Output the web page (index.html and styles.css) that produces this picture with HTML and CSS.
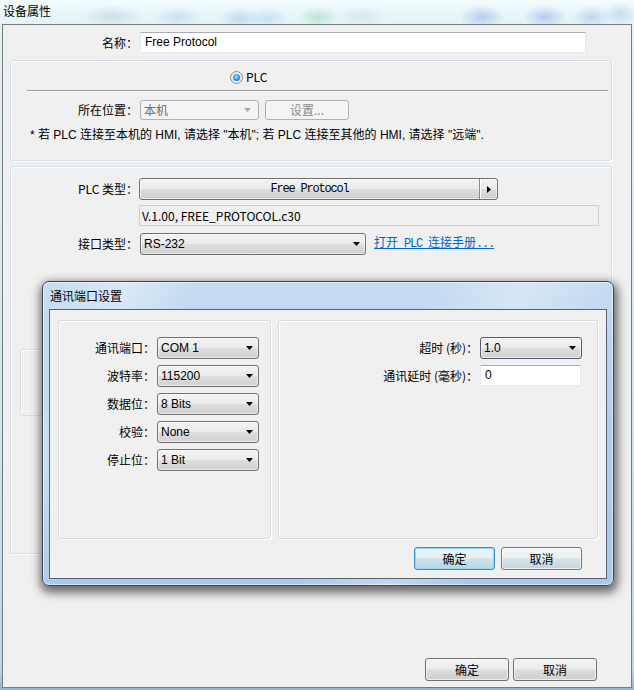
FILE: index.html
```html
<!DOCTYPE html>
<html lang="zh-CN">
<head>
<meta charset="utf-8">
<title>设备属性</title>
<link rel="stylesheet" href="styles.css">
</head>
<body>
<div class="screen">
  <div class="glass-title"><span class="win-title">设备属性</span></div>
  <div class="window">
    <div class="row name-row">
      <span class="lbl lbl-top">名称：</span>
      <div class="textbox name-box lat">Free Protocol</div>
    </div>

    <div class="group g1">
      <div class="radio-row">
        <span class="radio"><span class="dot"></span></span>
        <span class="radio-text">PLC</span>
      </div>
      <div class="sep"></div>
      <div class="row loc-row">
        <span class="lbl">所在位置：</span>
        <div class="combo disabled loc-combo">
          <span class="combo-text">本机</span>
          <svg class="arrow" width="7" height="4" viewBox="0 0 7 4"><path d="M0 0h7L3.5 4z" fill="#a8a8a8"/></svg>
        </div>
        <div class="btn disabled set-btn">设置...</div>
      </div>
      <div class="note lat">* 若 PLC 连接至本机的 HMI, 请选择 "本机"; 若 PLC 连接至其他的 HMI, 请选择 "远端".</div>
    </div>

    <div class="group g2">
      <div class="row plc-row">
        <span class="lbl">PLC 类型：</span>
        <div class="btn split plc-btn">
          <span class="split-text">Free Protocol</span>
          <span class="split-arrow"><svg width="4" height="7" viewBox="0 0 4 7"><path d="M0 0v7l4-3.5z" fill="#000"/></svg></span>
        </div>
      </div>
      <div class="row ver-row">
        <div class="textbox readonly ver-box">V.1.00, FREE_PROTOCOL.c30</div>
      </div>
      <div class="row if-row">
        <span class="lbl">接口类型：</span>
        <div class="combo if-combo">
          <span class="combo-text lat">RS-232</span>
          <svg class="arrow" width="7" height="4" viewBox="0 0 7 4"><path d="M0 0h7L3.5 4z" fill="#000"/></svg>
        </div>
        <a class="link">打开<span class="m"> PLC </span>连接手册<span class="m">...</span></a>
      </div>
      <div class="hidden-box"></div>
    </div>

    <div class="footer">
      <div class="btn fbtn">确定</div>
      <div class="btn fbtn">取消</div>
    </div>
  </div>

  <div class="dialog">
    <div class="dlg-title">通讯端口设置</div>
    <div class="dlg-client">
      <div class="panels">
        <div class="panel pleft">
          <div class="frow"><span class="flbl">通讯端口：</span><div class="combo fcombo"><span class="combo-text lat">COM 1</span><svg class="arrow" width="7" height="4" viewBox="0 0 7 4"><path d="M0 0h7L3.5 4z" fill="#000"/></svg></div></div>
          <div class="frow"><span class="flbl">波特率：</span><div class="combo fcombo"><span class="combo-text lat">115200</span><svg class="arrow" width="7" height="4" viewBox="0 0 7 4"><path d="M0 0h7L3.5 4z" fill="#000"/></svg></div></div>
          <div class="frow"><span class="flbl">数据位：</span><div class="combo fcombo"><span class="combo-text lat">8 Bits</span><svg class="arrow" width="7" height="4" viewBox="0 0 7 4"><path d="M0 0h7L3.5 4z" fill="#000"/></svg></div></div>
          <div class="frow"><span class="flbl">校验：</span><div class="combo fcombo"><span class="combo-text lat">None</span><svg class="arrow" width="7" height="4" viewBox="0 0 7 4"><path d="M0 0h7L3.5 4z" fill="#000"/></svg></div></div>
          <div class="frow"><span class="flbl">停止位：</span><div class="combo fcombo"><span class="combo-text lat">1 Bit</span><svg class="arrow" width="7" height="4" viewBox="0 0 7 4"><path d="M0 0h7L3.5 4z" fill="#000"/></svg></div></div>
        </div>
        <div class="panel pright">
          <div class="frow"><span class="rlbl">超时 (秒)：</span><div class="combo rcombo"><span class="combo-text lat">1.0</span><svg class="arrow" width="7" height="4" viewBox="0 0 7 4"><path d="M0 0h7L3.5 4z" fill="#000"/></svg></div></div>
          <div class="frow frow2"><span class="rlbl">通讯延时 (毫秒)：</span><div class="textbox rbox lat">0</div></div>
        </div>
      </div>
      <div class="dlg-buttons">
        <div class="btn dbtn default">确定</div>
        <div class="btn dbtn">取消</div>
      </div>
    </div>
  </div>
</div>
</body>
</html>
```

FILE: styles.css
```css
* { box-sizing: border-box; }
html, body { margin: 0; padding: 0; }
body {
  width: 634px;
  height: 690px;
  overflow: hidden;
  font-family: "Noto Sans CJK SC", "Liberation Sans", sans-serif;
  font-size: 12px;
  color: #000;
}
.lat { font-family: "Liberation Sans", "Noto Sans CJK SC", sans-serif; }

.screen {
  position: relative;
  width: 634px;
  height: 690px;
  overflow: hidden;
  background:
    radial-gradient(30px 11px at 112px 16px, rgba(120,140,170,.22), rgba(120,140,170,0)),
    radial-gradient(24px 11px at 178px 17px, rgba(80,140,220,.20), rgba(80,140,220,0)),
    radial-gradient(22px 11px at 240px 18px, rgba(70,145,230,.24), rgba(70,145,230,0)),
    radial-gradient(20px 11px at 268px 18px, rgba(70,145,230,.20), rgba(70,145,230,0)),
    radial-gradient(20px 11px at 318px 17px, rgba(80,190,130,.30), rgba(80,190,130,0)),
    radial-gradient(26px 11px at 362px 16px, rgba(150,170,190,.18), rgba(150,170,190,0)),
    radial-gradient(22px 12px at 482px 17px, rgba(70,120,220,.32), rgba(70,120,220,0)),
    radial-gradient(22px 12px at 545px 17px, rgba(70,120,220,.32), rgba(70,120,220,0)),
    radial-gradient(20px 12px at 592px 17px, rgba(70,130,220,.26), rgba(70,130,220,0)),
    radial-gradient(18px 12px at 620px 14px, rgba(70,130,220,.22), rgba(70,130,220,0)),
    linear-gradient(180deg, #f3fbfd 0, #e2f3f7 24px, #d3e9f2 50%, #b9d8ea 97%, #8cb6d6 100%);
}

.glass-title {
  height: 24px;
  padding: 0 0 2px 3px;
  display: flex;
  align-items: center;
}
.win-title { line-height: 14px; }

.window {
  margin-left: 2px;
  width: 630px;
  height: 664px;
  border: 1px solid #7a7a7a;
  background: #f0f0f0;
  display: flex;
  flex-direction: column;
  padding-bottom: 6px;
}

.row { display: flex; align-items: center; }
.lbl {
  width: 127px;
  margin-right: 2px;
  text-align: right;
  line-height: 16px;
  white-space: nowrap;
}
.lbl-top { width: 135px; }

.textbox {
  background: #fff;
  border: 1px solid #e3e9ef;
  border-top-color: #abadb3;
  line-height: 19px;
  padding-left: 4px;
}
.name-row { margin-top: 7px; }
.name-box { width: 446px; height: 21px; }

.group {
  margin-left: 7px;
  width: 602px;
  border: 1px solid #d5dfe5;
  border-radius: 3px;
  box-shadow: inset 1px 1px 0 #fff, 1px 1px 0 #fff;
}
.g1 { margin-top: 7px; height: 101px; }
.g2 { margin-top: 5px; height: 388px; }

.radio-row {
  margin-top: 9px;
  height: 14px;
  padding-left: 219px;
  display: flex;
  align-items: center;
}
.radio {
  width: 13px;
  height: 13px;
  border-radius: 50%;
  border: 1px solid #8e8f8f;
  background: radial-gradient(circle at 50% 50%, #fdfdfd 0, #e2e2e2 100%);
  display: flex;
  align-items: center;
  justify-content: center;
}
.radio .dot {
  width: 7px;
  height: 7px;
  border-radius: 50%;
  background: radial-gradient(circle at 45% 40%, #a9e6ff 0, #36a2e2 45%, #175497 100%);
}
.radio-text { margin-left: 3px; line-height: 14px; }

.sep {
  margin: 6px 3px 0 16px;
  height: 2px;
  border-top: 1px solid #a0a0a0;
  border-bottom: 1px solid #fff;
}

.loc-row { margin-top: 8px; height: 20px; }

.combo {
  position: relative;
  display: flex;
  align-items: center;
  border: 1px solid #707070;
  border-radius: 3px;
  background: linear-gradient(180deg, #f3f3f3 0%, #ebebeb 48%, #dedede 52%, #d0d0d0 100%);
  box-shadow: inset 0 0 0 1px rgba(255,255,255,.55);
  padding-left: 3px;
}
.combo .combo-text { line-height: 16px; white-space: nowrap; }
.combo .arrow { position: absolute; right: 5px; top: 50%; margin-top: -2px; }
.combo.disabled {
  border-color: #adb2b5;
  background: #f4f4f4;
  box-shadow: none;
  color: #6d6d6d;
}
.combo.disabled .arrow { right: 7px; }
.loc-combo { width: 119px; height: 20px; }

.btn {
  display: flex;
  align-items: center;
  justify-content: center;
  border: 1px solid #707070;
  border-radius: 3px;
  background: linear-gradient(180deg, #f3f3f3 0%, #ebebeb 48%, #dddddd 52%, #cfcfcf 100%);
  box-shadow: inset 0 0 0 1px rgba(255,255,255,.6);
  line-height: 16px;
}
.btn.disabled {
  border-color: #adb2b5;
  background: #f4f4f4;
  box-shadow: none;
  color: #8d8d8d;
}
.set-btn { width: 84px; height: 20px; margin-left: 6px; }

.note {
  margin-top: 8px;
  padding-left: 19px;
  line-height: 14px;
  white-space: nowrap;
}

.plc-row { margin-top: 11px; height: 22px; }
.plc-btn {
  width: 359px;
  height: 22px;
  justify-content: flex-start;
  margin-left: -1px;
}
.split-text {
  flex: 1;
  text-align: center;
  font-family: "Liberation Mono", monospace;
  font-size: 12px;
  letter-spacing: -1.2px;
  line-height: 16px;
}
.split-arrow {
  width: 18px;
  height: 100%;
  border-left: 1px solid #8c8c8c;
  box-shadow: inset 1px 0 0 #fff;
  display: flex;
  align-items: center;
  justify-content: center;
}

.ver-row { margin-top: 5px; }
.ver-box {
  margin-left: 128px;
  width: 460px;
  height: 21px;
  background: #f0f0f0;
  border: 1px solid #cfcfcf;
  padding-left: 2px;
}

.if-row { margin-top: 7px; height: 22px; }
.if-combo { width: 226px; height: 22px; }
.link {
  margin-left: 8px;
  color: #0066cc;
  text-decoration: underline;
  line-height: 14px;
  margin-top: -3px;
  white-space: nowrap;
}
.link .m {
  font-family: "Liberation Mono", monospace;
  font-size: 12px;
  letter-spacing: -1.2px;
}

.hidden-box {
  margin: 94px 0 0 9px;
  width: 200px;
  height: 67px;
  border: 1px solid #d5dfe5;
  border-radius: 3px;
  box-shadow: inset 1px 1px 0 #fff;
}

.footer {
  margin-top: auto;
  display: flex;
  justify-content: flex-end;
  gap: 4px;
  padding-right: 34px;
}
.fbtn { width: 84px; height: 23px; }

/* dialog */
.dialog {
  position: absolute;
  left: 42px;
  top: 281px;
  width: 572px;
  height: 305px;
  border: 1px solid #3c4756;
  border-radius: 7px;
  padding: 0 6px 6px 6px;
  display: flex;
  flex-direction: column;
  background:
    linear-gradient(115deg, rgba(255,255,255,0) 0%, rgba(255,255,255,.35) 12%, rgba(255,255,255,0) 22%, rgba(255,255,255,0) 55%, rgba(255,255,255,.3) 68%, rgba(255,255,255,0) 80%),
    linear-gradient(180deg, #c6dcf2 0%, #b3cfec 40%, #a9c8ea 100%);
  box-shadow: 1px 4px 10px 3px rgba(0,0,0,.55), inset 0 0 0 1px rgba(255,255,255,.5);
}
.dlg-title {
  height: 27px;
  padding-left: 1px;
  display: flex;
  align-items: center;
  line-height: 14px;
}
.dlg-client {
  flex: 1;
  border: 1px solid #56626f;
  background: #f0f0f0;
  padding: 10px 8px 0 8px;
  display: flex;
  flex-direction: column;
}
.panels {
  display: grid;
  grid-template-columns: 213px 1fr;
  gap: 7px;
  height: 219px;
}
.panel {
  border: 1px solid #d5dfe5;
  border-radius: 3px;
  box-shadow: inset 1px 1px 0 #fff, 1px 1px 0 #fff;
  padding-top: 16px;
}
.frow {
  display: flex;
  align-items: center;
  height: 22px;
  margin-bottom: 6px;
}
.flbl, .rlbl {
  text-align: right;
  margin-right: 2px;
  line-height: 16px;
  white-space: nowrap;
}
.flbl { width: 96px; }
.rlbl { width: 199px; }
.fcombo { width: 102px; height: 22px; }
.rcombo { width: 102px; height: 22px; border-color: #4e5e70; }
.frow2 { height: 21px; }
.rbox { width: 101px; height: 21px; }

.dlg-buttons {
  margin-top: 8px;
  display: flex;
  justify-content: flex-end;
  gap: 6px;
  padding-right: 16px;
}
.dbtn {
  width: 81px;
  height: 23px;
  background: linear-gradient(180deg, #f3f6f8 0%, #e9eff2 48%, #d6e2e8 52%, #c6d5dd 100%);
  border-color: #6f7a85;
}
.dbtn.default {
  border-color: #3c8dc4;
  box-shadow: inset 0 0 0 1px #8fdcf8;
  background: linear-gradient(180deg, #eef6fa 0%, #e3eff5 48%, #cde1ea 52%, #bcd6e2 100%);
}
```
